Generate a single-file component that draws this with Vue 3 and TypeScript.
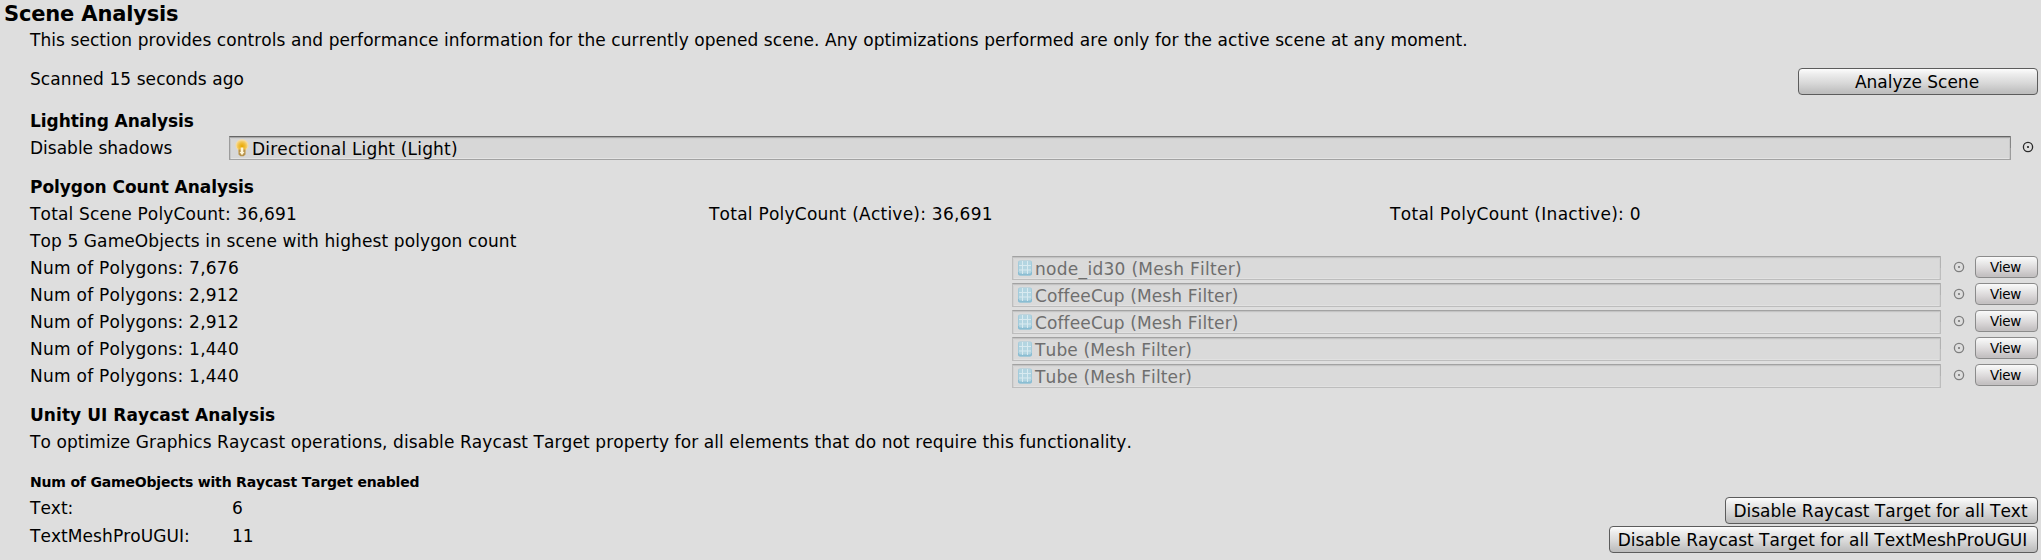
<script setup lang="ts">
interface MeshEntry { polygons: string; name: string; spacing: number }

const meshes: MeshEntry[] = [
  { polygons: '7,676', name: 'node_id30 (Mesh Filter)', spacing: 0.29 },
  { polygons: '2,912', name: 'CoffeeCup (Mesh Filter)', spacing: 0.12 },
  { polygons: '2,912', name: 'CoffeeCup (Mesh Filter)', spacing: 0.12 },
  { polygons: '1,440', name: 'Tube (Mesh Filter)', spacing: 0.14 },
  { polygons: '1,440', name: 'Tube (Mesh Filter)', spacing: 0.14 },
]
</script>

<template>
  <main class="panel">
    <h1 class="title">Scene Analysis</h1>
    <p class="line desc">This section provides controls and performance information for the currently opened scene. Any optimizations performed are only for the active scene at any moment.</p>

    <div class="scan">
      <span class="scan-text">Scanned 15 seconds ago</span>
      <button class="btn analyze">Analyze Scene</button>
    </div>

    <section class="section lighting">
      <h2 class="line head">Lighting Analysis</h2>
      <div class="line light-row">
        <span>Disable shadows</span>
        <div class="field">
          <svg class="light-icon" viewBox="0 0 14 18">
            <defs>
              <radialGradient id="bulb" cx="50%" cy="52%" r="55%">
                <stop offset="0" stop-color="#e8a800" />
                <stop offset="0.5" stop-color="#f0be3c" />
                <stop offset="1" stop-color="#f8dfa4" />
              </radialGradient>
            </defs>
            <path d="M7 .8C3.4.8 1 3.2 1 6.3c0 2.300 1.300 3.500 2.300 4.700.5.7.6 1.400.7 2.300h6c.1-.9.2-1.600.7-2.300C11.700 9.800 13 8.600 13 6.300 13 3.200 10.600.8 7 .8z" fill="url(#bulb)" stroke="#f6dda6" />
            <path d="M3.500 10.500h7v5L8.500 17.300h-3l-2-1.800z" fill="#b8924a" />
            <path d="M5.700 8.500h2.600v4.500h1.200L7 16.200 4.500 13h1.200z" fill="#fff6d8" />
          </svg>
          <span class="field-text light-name">Directional Light (Light)</span>
        </div>
        <svg class="picker" viewBox="0 0 12 12"><circle cx="6" cy="6" r="4.600" /><circle class="dot" cx="6" cy="6" r="1" /></svg>
      </div>
    </section>

    <section class="section">
      <h2 class="line head">Polygon Count Analysis</h2>
      <div class="line totals">
        <span class="t-scene">Total Scene PolyCount: 36,691</span>
        <span class="t-active">Total PolyCount (Active): 36,691</span>
        <span class="t-inactive">Total PolyCount (Inactive): 0</span>
      </div>
      <p class="line top">Top 5 GameObjects in scene with highest polygon count</p>
      <div v-for="(mesh, i) in meshes" :key="i" class="line mesh-row">
        <span class="polygons">Num of Polygons: {{ mesh.polygons }}</span>
        <div class="field muted">
          <svg class="mesh-icon" viewBox="0 0 14 16">
            <rect x="0" y="0.500" width="14" height="15" rx="2" fill="#a3cbdb" />
            <path d="M0 12h14v1.500a2 2 0 0 1-2 2H2a2 2 0 0 1-2-2z" fill="#8abdd2" />
            <rect x="1" y="1" width="12" height="12.500" rx="1" fill="#b3d5e1" />
            <path d="M4.500 1v13M9.500 1v13M1 5.500h12M1 10h12" stroke="#d8eaf0" fill="none" />
          </svg>
          <span class="field-text" :style="{ letterSpacing: mesh.spacing + 'px' }">{{ mesh.name }}</span>
        </div>
        <svg class="picker muted-picker" viewBox="0 0 12 12"><circle cx="6" cy="6" r="4.600" /><circle class="dot" cx="6" cy="6" r="1" /></svg>
        <button class="btn view">View</button>
      </div>
    </section>

    <section class="section">
      <h2 class="line head raycast-head">Unity UI Raycast Analysis</h2>
      <p class="line optimize">To optimize Graphics Raycast operations, disable Raycast Target property for all elements that do not require this functionality.</p>
      <h3 class="line sub">Num of GameObjects with Raycast Target enabled</h3>
      <div class="line ray-row">
        <span>Text:</span><span>6</span>
        <button class="btn ray-text">Disable Raycast Target for all Text</button>
      </div>
      <div class="line ray-row">
        <span class="tmp-label">TextMeshProUGUI:</span><span>11</span>
        <button class="btn ray-tmp">Disable Raycast Target for all TextMeshProUGUI</button>
      </div>
    </section>
  </main>
</template>

<style>
body { background: #dedede; }
</style>

<style scoped>
.panel {
  box-sizing: border-box;
  width: 2041px;
  height: 560px;
  padding: 0 3px 0 30px;
  overflow: hidden;
  background: #dedede;
  color: #000;
  font: 17px/20px "DejaVu Sans", Verdana, sans-serif;
  font-kerning: none;
  font-variant-ligatures: none;
  white-space: nowrap;
}
h1, h2, h3, p { margin: 0; font-weight: normal; }
.line { box-sizing: border-box; height: 27px; padding-top: 3px; }
.title {
  height: 27px;
  margin-left: -26px;
  font-size: 21px;
  line-height: 28px;
  font-weight: bold;
  letter-spacing: -0.17px;
}
.desc { letter-spacing: 0.07px; }
.scan {
  display: flex;
  justify-content: space-between;
  margin-top: 14px;
  height: 27px;
}
.scan-text { padding-top: 1px; letter-spacing: 0.08px; }
.section { margin-top: 12px; }
.lighting { margin-top: 13px; }
.head { font-size: 17px; font-weight: bold; letter-spacing: -0.05px; }
.raycast-head { letter-spacing: 0.05px; }

.btn {
  box-sizing: border-box;
  height: 27px;
  margin: 0;
  padding: 0 2px 0 0;
  border: 1.500px solid #5c5c5c;
  border-radius: 4px;
  background: linear-gradient(#fdfdfd 0%, #ececec 22%, #d9d9d9 55%, #c2c2c2 88%, #bdbdbd 100%);
  color: #000;
  font: inherit;
  font-kerning: none;
  text-align: center;
}
.analyze { width: 240px; }

.light-row { display: grid; grid-template-columns: 199px 1782px 1fr; }
.field {
  box-sizing: border-box;
  position: relative;
  display: flex;
  height: 24px;
  margin-top: -2px;
  padding: 1px 0 0 5px;
  border: 1px solid #9c9c9c;
  border-top-color: #666;
  border-bottom-color: #a2a2a2;
  background: #d7d7d7;
  box-shadow: inset 0 1px #a8a8a8, inset 0 2px #cfcfcf, inset 1px 0 #c6c6c6, inset -1px 0 #cacaca, inset 0 -1px #e4e4e4;
}
.field::after {
  content: "";
  position: absolute;
  top: -1px;
  right: -1px;
  width: 1px;
  height: 12px;
  background: #858585;
}
.light-icon { width: 14px; height: 18px; margin-top: 1px; }
.field-text { padding-top: 1px; }
.light-name { margin-left: 3px; letter-spacing: 0.18px; }
.picker {
  width: 12px;
  height: 12px;
  margin: 3px 0 0 11px;
  fill: none;
  stroke: #2a2a2a;
  stroke-width: 1.300;
}
.picker .dot { fill: #111; stroke: none; }

.totals { display: grid; grid-template-columns: 679px 681px 1fr; }
.t-scene { letter-spacing: 0.18px; }
.t-active { letter-spacing: 0.24px; }
.t-inactive { letter-spacing: 0.31px; }
.top { letter-spacing: 0.105px; }

.mesh-row { display: grid; grid-template-columns: 982px 929px 34px 63px; }
.polygons { letter-spacing: 0.26px; }
.muted {
  border-color: #bdbdbd;
  border-top-color: #a2a2a2;
  background: #dadada;
  box-shadow: inset 0 1px #c3c3c3, inset 0 2px #d6d6d6, inset 1px 0 #d2d2d2, inset -1px 0 #d4d4d4, inset 0 -1px #e1e1e1;
  color: #6e6e6e;
}
.muted::after { background: #b2b2b2; }
.mesh-icon { width: 14px; height: 16px; margin-top: 2px; }
.muted .field-text { margin-left: 3px; }
.muted-picker { margin-left: 12px; stroke: #7e7e7e; }
.muted-picker .dot { fill: #707070; }
.view {
  height: 22px;
  margin-top: -2px;
  border-color: #8b8b8b;
  background: linear-gradient(#fafafa 0%, #ececec 25%, #d9d6d7 60%, #c4c1c2 92%);
  font-size: 13.500px;
  line-height: 18px;
  letter-spacing: -0.3px;
}

.optimize { letter-spacing: 0.085px; }
.sub {
  height: 26px;
  margin-top: 13px;
  font-size: 14px;
  font-weight: bold;
  letter-spacing: -0.18px;
}
.ray-row {
  display: grid;
  grid-template-columns: 202px 1fr auto;
  height: 28px;
}
.tmp-label { letter-spacing: 0.07px; }
.ray-text { width: 313px; margin-top: -1px; }
.ray-tmp { width: 429px; }
</style>
